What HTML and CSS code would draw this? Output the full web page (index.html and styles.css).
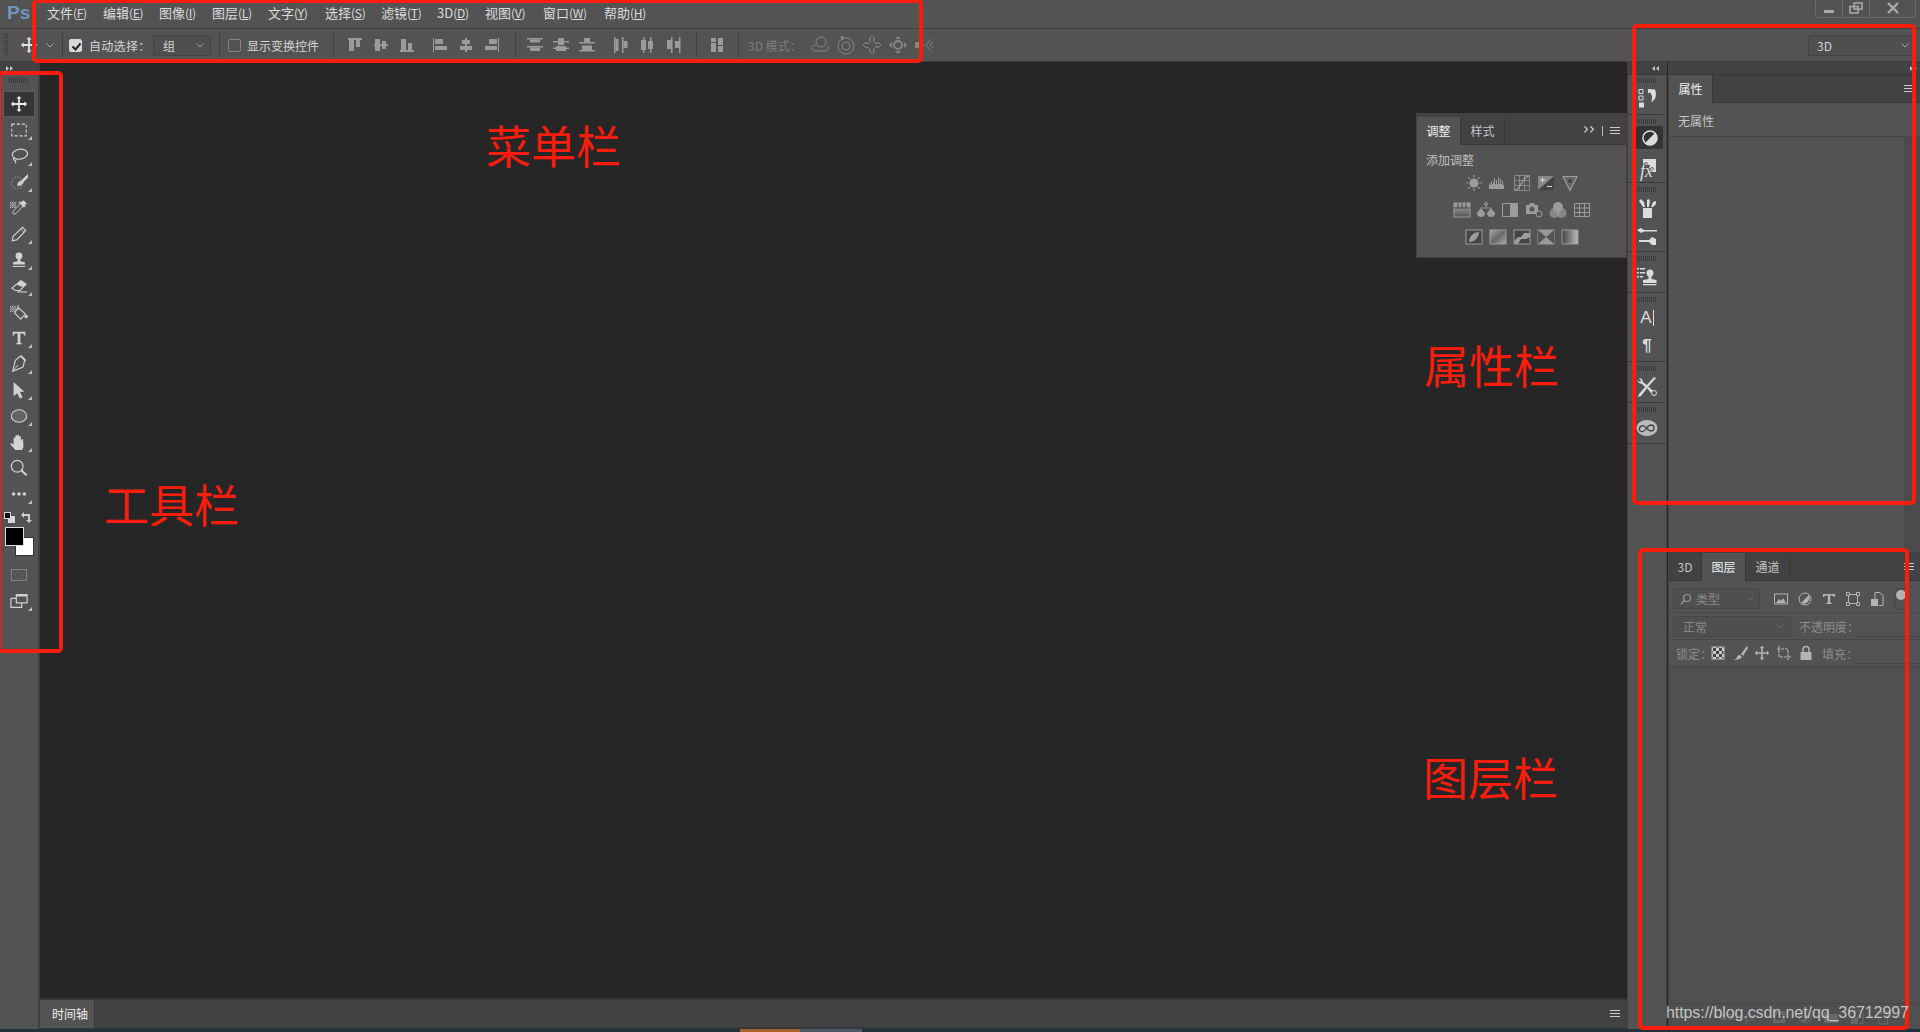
FILE: index.html
```html
<!DOCTYPE html>
<html lang="zh-CN">
<head>
    <meta charset="UTF-8">
    <title>Photoshop 界面</title>
    <link rel="stylesheet" href="styles.css">
</head>
<body>
<svg class="defs" width="0" height="0">
    <defs>
        <pattern id="chk" width="2" height="2" patternUnits="userSpaceOnUse"><rect width="2" height="2" fill="#eee"/><rect width="1" height="1" fill="#222"/><rect x="1" y="1" width="1" height="1" fill="#222"/></pattern>
        <pattern id="chk4" width="6" height="6" patternUnits="userSpaceOnUse"><rect width="6" height="6" fill="#ccc"/><rect width="3" height="3" fill="#444"/><rect x="3" y="3" width="3" height="3" fill="#444"/></pattern>
        <linearGradient id="gh"><stop offset="0" stop-color="#444"/><stop offset="1" stop-color="#bbb"/></linearGradient>
        <linearGradient id="gv" x2="0" y2="1"><stop offset="0" stop-color="#aaa"/><stop offset="1" stop-color="#555"/></linearGradient>
        <linearGradient id="gd" x2="1" y2="1"><stop offset="0" stop-color="#aaa"/><stop offset=".5" stop-color="#666"/><stop offset="1" stop-color="#aaa"/></linearGradient>

        <symbol id="s-right" viewBox="0 0 8 5"><path d="M0 0l3 2.500L0 5zM4 0l3 2.500L4 5z"/></symbol>
        <symbol id="s-left" viewBox="0 0 8 5"><path d="M3 0L0 2.500 3 5zM7 0L4 2.500 7 5z"/></symbol>

        <!-- tools -->
        <symbol id="i-move" viewBox="0 0 20 20"><path d="M10 1l3 3h-2v5h5V7l3 3-3 3v-2h-5v5h2l-3 3-3-3h2v-5H4v2l-3-3 3-3v2h5V4H7z"/></symbol>
        <symbol id="i-marquee" viewBox="0 0 20 20"><rect x="2" y="3.500" width="16" height="13" fill="none" stroke="currentColor" stroke-width="1.200" stroke-dasharray="3.500 2"/></symbol>
        <symbol id="i-lasso" viewBox="0 0 20 20"><ellipse cx="11" cy="8" rx="8.500" ry="5.500" fill="none" stroke="currentColor" stroke-width="1.300" transform="rotate(-8 11 8)"/><path d="M5 12c-2 1-1 3 1 3 1 1 0 2 0 3" fill="none" stroke="currentColor" stroke-width="1.300"/></symbol>
        <symbol id="i-qsel" viewBox="0 0 20 20"><circle cx="8" cy="11" r="6.500" fill="none" stroke="currentColor" stroke-dasharray="1 2"/><path d="M20 1l-8 8c-2 0-4 2-4 5 3 1 6-1 6-3l6-6z"/></symbol>
        <symbol id="i-drop" viewBox="0 0 20 20"><rect x="0" y="3" width="7" height="7" fill="url(#chk)"/><path d="M15 2l3 3-2 2 1 1-2 1-1-1-7 8-3 1-1-1 1-3 7-7-1-1 1-2 1 1z" fill="none" stroke="currentColor"/><path d="M15 2l3 3-2 2 1 1-2 1-4-4 1-2 1 1z"/></symbol>
        <symbol id="i-pencil" viewBox="0 0 20 20"><path d="M2.500 17.500l1-5L14 2.500l3.500 3.500L7.500 16.500z" fill="none" stroke="currentColor" stroke-width="1.300"/><path d="M12 4.500l3.500 3.500" stroke="currentColor"/></symbol>
        <symbol id="i-stamp" viewBox="0 0 20 20"><circle cx="10" cy="5.500" r="3.800"/><path d="M8.500 8h3v3.500l5 1V15h-13v-2.500l5-1z"/><rect x="3" y="16.500" width="14" height="1.200"/></symbol>
        <symbol id="i-eraser" viewBox="0 0 20 20"><path d="M2 12.500L12 4l6 4-7 7H6z" fill="none" stroke="currentColor" stroke-width="1.200"/><path d="M7 8.300L12 4l6 4-3.500 3.500z"/><rect x="8" y="16" width="11" height="1.200"/></symbol>
        <symbol id="i-fill" viewBox="0 0 20 20"><rect x="0" y="3" width="7" height="7" fill="url(#chk)"/><path d="M9 5l8 7-5 6-7-7z" fill="none" stroke="currentColor" stroke-width="1.200"/><path d="M9 2v6" stroke="currentColor"/><circle cx="18" cy="15" r="2"/></symbol>
        <symbol id="i-type" viewBox="0 0 20 20"><path d="M3 3h14v4.500h-1C15.500 5.500 15 5 13 5h-1.500v10.500l2 .5v1h-7v-1l2-.5V5H7C5 5 4.500 5.500 4 7.500H3z"/></symbol>
        <symbol id="i-pen" viewBox="0 0 20 20"><path d="M12 1l1 1 4 4-1 1-1.500 6.500L3 18l3-12z" fill="none" stroke="currentColor" stroke-width="1.300"/><path d="M4 17l5-6" stroke="currentColor"/><path d="M11 1.500l5.500 5.500 1-2-4.500-4.500z"/></symbol>
        <symbol id="i-arrow" viewBox="0 0 20 20"><path d="M4 1l12 11h-5l3 6-3 1.500-3-6-4 3.500z"/></symbol>
        <symbol id="i-ellipse" viewBox="0 0 20 20"><ellipse cx="10" cy="10" rx="8.500" ry="7" fill="currentColor" fill-opacity=".15" stroke="currentColor" stroke-width="1.200"/></symbol>
        <symbol id="i-hand" viewBox="0 0 20 20"><path d="M6 19C4 17 2 14 0 12c1-1.500 3-.5 4 1V6c0-1.500 2-1.500 2 0v3V3.500c0-1.500 2-1.500 2 0V9V3c0-1.500 2-1.500 2 0v6V4.500c0-1.500 2-1.500 2 0V9l1-2c1-1 2 0 1.500 1L15 15c-.5 2-1 3-2 4z"/></symbol>
        <symbol id="i-zoom" viewBox="0 0 20 20"><circle cx="8" cy="8" r="6.500" fill="none" stroke="currentColor" stroke-width="1.300"/><path d="M12.500 12.500l6 5.500" stroke="currentColor" stroke-width="2.400"/></symbol>
        <symbol id="i-dots" viewBox="0 0 20 20"><circle cx="4" cy="10" r="2"/><circle cx="10" cy="10" r="2"/><circle cx="16" cy="10" r="2"/></symbol>
        <symbol id="i-qmask" viewBox="0 0 20 20"><rect x="1.500" y="4" width="17" height="12" fill="none" stroke="currentColor"/><circle cx="10" cy="10" r="4" fill="none" stroke="currentColor" stroke-dasharray="1 2"/></symbol>
        <symbol id="i-screen" viewBox="0 0 20 20"><path d="M7 3h12v9H7z M1 7h6M1 7v10h12v-5" fill="none" stroke="currentColor" stroke-width="1.300"/><rect x="7" y="3" width="12" height="2"/></symbol>

        <!-- align / distribute -->
        <symbol id="a-top" viewBox="0 0 20 20"><rect x="3" y="3" width="14" height="2"/><rect x="4" y="5" width="5" height="11"/><rect x="11" y="5" width="4" height="7"/></symbol>
        <symbol id="a-vc" viewBox="0 0 20 20"><rect x="3" y="9" width="14" height="2"/><rect x="4" y="4" width="5" height="12"/><rect x="11" y="6" width="4" height="8"/></symbol>
        <symbol id="a-bot" viewBox="0 0 20 20"><rect x="3" y="15" width="14" height="2"/><rect x="4" y="4" width="5" height="11"/><rect x="11" y="8" width="4" height="7"/></symbol>
        <symbol id="a-left" viewBox="0 0 20 20"><rect x="3" y="3" width="1" height="14"/><rect x="5" y="4" width="8" height="5"/><rect x="5" y="11" width="12" height="4"/></symbol>
        <symbol id="a-hc" viewBox="0 0 20 20"><rect x="9" y="3" width="2" height="14"/><rect x="6" y="5" width="8" height="4"/><rect x="4" y="11" width="12" height="4"/></symbol>
        <symbol id="a-right" viewBox="0 0 20 20"><rect x="16" y="3" width="1" height="14"/><rect x="7" y="4" width="8" height="5"/><rect x="3" y="11" width="12" height="4"/></symbol>
        <symbol id="d-top" viewBox="0 0 20 20"><rect x="2" y="3" width="16" height="1.500"/><rect x="5" y="4.500" width="10" height="3"/><rect x="2" y="11" width="16" height="1.500"/><rect x="5" y="12.500" width="10" height="3.500"/></symbol>
        <symbol id="d-vc" viewBox="0 0 20 20"><rect x="2" y="6" width="16" height="1.500"/><rect x="7" y="3" width="6" height="7"/><rect x="2" y="12.500" width="16" height="1.500"/><rect x="5" y="11" width="10" height="5"/></symbol>
        <symbol id="d-bot" viewBox="0 0 20 20"><rect x="2" y="7" width="16" height="1.500"/><rect x="7" y="3" width="6" height="4"/><rect x="2" y="15" width="16" height="1.500"/><rect x="5" y="10.500" width="10" height="4.500"/></symbol>
        <symbol id="d-left" viewBox="0 0 20 20"><rect x="3" y="2" width="1.500" height="16"/><rect x="4.500" y="4" width="3" height="12"/><rect x="11" y="2" width="1.500" height="16"/><rect x="12.500" y="6" width="4" height="7"/></symbol>
        <symbol id="d-hc" viewBox="0 0 20 20"><rect x="6" y="2" width="1.500" height="16"/><rect x="4" y="5" width="5" height="10"/><rect x="13" y="2" width="1.500" height="16"/><rect x="11" y="6" width="5" height="8"/></symbol>
        <symbol id="d-right" viewBox="0 0 20 20"><rect x="8" y="2" width="1.500" height="16"/><rect x="4" y="5" width="4" height="9"/><rect x="16" y="2" width="1.500" height="16"/><rect x="12" y="6" width="4" height="7"/></symbol>
        <symbol id="a-auto" viewBox="0 0 20 20"><rect x="4" y="3" width="5" height="4"/><rect x="4" y="8" width="5" height="9"/><rect x="11" y="3" width="5" height="7"/><rect x="11" y="11" width="5" height="6"/></symbol>

        <!-- 3d mode -->
        <symbol id="m-orbit" viewBox="0 0 20 20"><g fill="none" stroke="currentColor"><circle cx="11" cy="7" r="5"/><path d="M6 10c-4 0-5 3-4 4l3 2h11c3-1 3-4 1-5"/></g></symbol>
        <symbol id="m-roll" viewBox="0 0 20 20"><g fill="none" stroke="currentColor"><circle cx="10" cy="11" r="8"/><circle cx="10" cy="11" r="4"/></g><path d="M4 1l5 1-3 4z"/></symbol>
        <symbol id="m-pan" viewBox="0 0 20 20"><path d="M10 1l3 3h-1.500v2.500c2 .5 2 .5 2 2h2.500V7l3 3-3 3v-1.500h-2.500c0 1.500 0 1.500-2 2V16H13l-3 3-3-3h1.500v-1.500c-2-.5-2-.5-2-2H4V13l-3-3 3-3v1.500h2.500c0-1.500 0-1.500 2-2V4H7z" fill="none" stroke="currentColor"/></symbol>
        <symbol id="m-slide" viewBox="0 0 20 20"><path d="M10 1l3 3h-6zM10 19l3-3H7zM1 10l3-3v6zM19 10l-3-3v6z"/><circle cx="10" cy="10" r="4" fill="none" stroke="currentColor" stroke-width="2"/></symbol>
        <symbol id="m-scale" viewBox="0 0 20 20"><rect x="1" y="7" width="4" height="6"/><path d="M6 7l4 3-4 3zM17 4l-5 6 5 6M19 7l-3 3 3 3" fill="none" stroke="currentColor"/></symbol>

        <!-- adjustments -->
        <symbol id="j-sun" viewBox="0 0 18 18"><circle cx="9" cy="9" r="4.500"/><path d="M9 1v2.500M9 14.500V17M1 9h2.500M14.500 9H17M3.300 3.300l1.800 1.800M12.900 12.900l1.800 1.800M14.700 3.300l-1.800 1.800M5.100 12.900l-1.800 1.800" stroke="currentColor" stroke-width="1.200"/></symbol>
        <symbol id="j-levels" viewBox="0 0 18 18"><path d="M0 15V9h1v2h1V7h1v3h1V8h1V4h1v6h1V6h1v4h1V3h1v7h1V5h1v5h1V7h1v4h1v4z"/></symbol>
        <symbol id="j-curves" viewBox="0 0 18 18"><path d="M1.500 1.500h15v15h-15zM6.500 1.500v15M11.500 1.500v15M1.500 6.500h15M1.500 11.500h15" fill="none" stroke="currentColor" stroke-opacity=".7"/><path d="M2 16c6 0 6-13 14-14" fill="none" stroke="currentColor" stroke-width="1.300"/></symbol>
        <symbol id="j-expo" viewBox="0 0 18 18"><rect x="1" y="2" width="16" height="14" fill="#888"/><path d="M1 16L17 2v14z" fill="#444"/><path d="M3 6h5M5.500 3.500v5M10 12.500h5" stroke="#ddd"/></symbol>
        <symbol id="j-vib" viewBox="0 0 18 18"><path d="M2 2.500h14L9 16.500z" fill="#666" stroke="currentColor" stroke-width="1.200"/><circle cx="9" cy="7" r="2" fill="#444"/></symbol>
        <symbol id="j-hsl" viewBox="0 0 18 18"><rect x="1" y="2" width="16" height="14" fill="url(#gv)" stroke="currentColor"/><path d="M1 7h16M5 2v5M9 2v5M13 2v5" stroke="#444"/></symbol>
        <symbol id="j-bal" viewBox="0 0 18 18"><path d="M9 3v3M4 7h10" stroke="currentColor"/><circle cx="9" cy="3" r="1.500" fill="none" stroke="currentColor"/><path d="M0 12l4-5 4 5a4 4 0 0 1-8 0zM10 12l4-5 4 5a4 4 0 0 1-8 0z"/></symbol>
        <symbol id="j-bw" viewBox="0 0 18 18"><rect x="1.500" y="2.500" width="15" height="13" fill="#555" stroke="currentColor"/><rect x="9" y="2.500" width="7.500" height="13"/></symbol>
        <symbol id="j-photo" viewBox="0 0 18 18"><path d="M1 4h3l1-2h4l1 2h3v9H1z"/><circle cx="7" cy="8" r="2.500" fill="#555"/><circle cx="14" cy="13" r="3" fill="#555" stroke="currentColor"/></symbol>
        <symbol id="j-mix" viewBox="0 0 18 18"><circle cx="9" cy="6" r="5"/><circle cx="5.500" cy="12" r="5" fill-opacity=".7"/><circle cx="12.500" cy="12" r="5" fill-opacity=".7"/></symbol>
        <symbol id="j-lut" viewBox="0 0 18 18"><path d="M1.500 2.500h15v13h-15zM6.500 2.500v13M11.500 2.500v13M1.500 7h15M1.500 11.500h15" fill="none" stroke="currentColor"/></symbol>
        <symbol id="j-inv" viewBox="0 0 18 18"><rect x="1" y="2" width="16" height="14" fill="#444" stroke="currentColor"/><path d="M4 14C4 8 9 4 14 4c0 5-4 10-10 10z"/></symbol>
        <symbol id="j-post" viewBox="0 0 18 18"><rect x="1" y="2" width="16" height="14" fill="url(#gd)" stroke="currentColor"/></symbol>
        <symbol id="j-thr" viewBox="0 0 18 18"><rect x="1" y="2" width="16" height="14" fill="#444" stroke="currentColor"/><path d="M1 13l4-4h3l3-4h6v4l-4 2H8l-3 5H1z"/></symbol>
        <symbol id="j-sel" viewBox="0 0 18 18"><rect x="1" y="2" width="16" height="14" stroke="currentColor" fill="#999"/><path d="M1 2l8 7-8 7zM17 2L9 9l8 7z" fill="#555"/></symbol>
        <symbol id="j-grad" viewBox="0 0 18 18"><rect x="1" y="2" width="16" height="14" fill="url(#gh)" stroke="currentColor"/></symbol>

        <!-- dock -->
        <symbol id="k-hist" viewBox="0 0 22 22"><path d="M3 1.500h4v4H3zM3 8h4v4H3z" fill="none" stroke="currentColor"/><rect x="3" y="14.500" width="5" height="5"/><path d="M12 1l7 .5c2 5 1 10-4 13 2-4 1-8-1-10l-2 1z"/></symbol>
        <symbol id="k-adj" viewBox="0 0 22 22"><circle cx="11" cy="11" r="7" fill="#333" stroke="currentColor" stroke-width="1.500"/><path d="M16 6a7 7 0 0 1-10 10z"/></symbol>
        <symbol id="k-fx" viewBox="0 0 22 22"><path d="M7 3h13v13h-8l2-7H7z"/></symbol>
        <symbol id="k-brush" viewBox="0 0 22 22"><rect x="7" y="11" width="9" height="10"/><path d="M7 10L3 4l2-2 3 3 1 5zM11 10V3l2-1 1 2-1 6zM15 10l2-5 3-1v3l-3 3z"/></symbol>
        <symbol id="k-slide" viewBox="0 0 22 22"><path d="M1 5l4-2 3 2h13v1.500H8L5 8zM3 15h10l3-3 4 2v6h-4l-3-3H3z"/></symbol>
        <symbol id="k-clone" viewBox="0 0 22 22"><path d="M1 2h2v1.500H1zM1 6h2v1.500H1zM1 10h2v1.500H1zM4 2h5v1.500H4zM4 6h5v1.500H4zM4 10h3v1.500H4z"/><circle cx="14" cy="7" r="3.500"/><path d="M12.500 9h3v4l5 1v3H7v-3l5.500-1zM7 18h13.500v1.200H7z"/></symbol>
        <symbol id="k-tools" viewBox="0 0 22 22"><path d="M3 2l3 1 1 3 5 4-2 2-4-4-3-1-2-3 3 2 1-1z"/><path d="M18 1l2 1-8 9 -7 9-3 1 1-3z"/><path d="M11 12l2-1 4 4-2 2z"/><circle cx="18" cy="17" r="2.500" fill="#535353" stroke="currentColor"/></symbol>
        <symbol id="k-cc" viewBox="0 0 22 22"><ellipse cx="11" cy="11" rx="10.500" ry="8" fill-opacity=".75"/><path d="M4 14c-2-3 1-6 4-5 3 2 4 5 7 5 4 0 4-6 0-6-3 0-4 3-5 4-2 3-4 3-6 2z" fill="none" stroke="#444" stroke-width="1.300"/></symbol>

        <!-- layers -->
        <symbol id="l-img" viewBox="0 0 16 16"><rect x="1.500" y="3" width="13" height="10" fill="none" stroke="currentColor"/><path d="M3 12l3-4 2 2 2-3 3 5z"/></symbol>
        <symbol id="l-adj" viewBox="0 0 16 16"><circle cx="8" cy="8" r="6" fill="none" stroke="currentColor"/><path d="M12 4a6 6 0 0 1-8 8z"/></symbol>
        <symbol id="l-t" viewBox="0 0 16 16"><path d="M2 3h12v3h-1c-.5-1-1-1.500-2.500-1.500H9.200v7l1.500.5v1H5.300v-1l1.500-.5v-7H5.500C4 4.500 3.500 5 3 6H2z"/></symbol>
        <symbol id="l-shape" viewBox="0 0 16 16"><path d="M3.500 3.500h9v9h-9z" fill="none" stroke="currentColor"/><path d="M1.500 1.500h3v3h-3zM11.500 1.500h3v3h-3zM1.500 11.500h3v3h-3zM11.500 11.500h3v3h-3z" fill="#535353" stroke="currentColor"/></symbol>
        <symbol id="l-smart" viewBox="0 0 16 16"><path d="M6 8V1.500h5l3 3v10h-4" fill="none" stroke="currentColor"/><rect x="2" y="8" width="7" height="7"/></symbol>
        <symbol id="l-brush" viewBox="0 0 16 16"><path d="M15 1l-6 8 2 2 5-8zM8 10c-2 0-3 1-3 2s-1 2-3 3c3 0 7-1 8-3z"/></symbol>
        <symbol id="l-crop" viewBox="0 0 16 16"><path d="M3 1v11h12M1 4h11v11" fill="none" stroke="currentColor" stroke-width="1.200" stroke-dasharray="3 1"/></symbol>
        <symbol id="l-lock" viewBox="0 0 16 16"><rect x="2.500" y="7" width="11" height="8"/><path d="M5 7V4.500a3 3 0 0 1 6 0V7" fill="none" stroke="currentColor" stroke-width="1.500"/></symbol>
        <symbol id="l-link" viewBox="0 0 16 16"><path d="M1 8a3 3 0 0 1 3-3h3v1.500H4a1.500 1.500 0 0 0 0 3h3V11H4a3 3 0 0 1-3-3zM9 5h3a3 3 0 0 1 0 6H9V9.500h3a1.500 1.500 0 0 0 0-3H9z"/></symbol>
        <symbol id="l-circ" viewBox="0 0 16 16"><path d="M2 2h12v12H2z"/><circle cx="8" cy="8" r="3.500" fill="#505050"/></symbol>
        <symbol id="l-folder" viewBox="0 0 16 16"><path d="M1 3h5l1 2h8v9H1z"/></symbol>
        <symbol id="l-trash" viewBox="0 0 16 16"><path d="M3 4h10l-1 11H4zM2 2.500h12V4H2z" fill="none" stroke="currentColor"/></symbol>
    </defs>
</svg>

<div class="app">
    <div class="menubar">
        <div class="logo">Ps</div>
        <div class="menu">
            <span class="m56">文件<i>(<u>F</u>)</i></span>
            <span class="m56">编辑<i>(<u>E</u>)</i></span>
            <span class="m53">图像<i>(<u>I</u>)</i></span>
            <span class="m56">图层<i>(<u>L</u>)</i></span>
            <span class="m57">文字<i>(<u>Y</u>)</i></span>
            <span class="m56">选择<i>(<u>S</u>)</i></span>
            <span class="m56">滤镜<i>(<u>T</u>)</i></span>
            <span class="m48">3D<i>(<u>D</u>)</i></span>
            <span class="m58">视图<i>(<u>V</u>)</i></span>
            <span class="m61">窗口<i>(<u>W</u>)</i></span>
            <span class="m56">帮助<i>(<u>H</u>)</i></span>
        </div>
        <div class="winbtns">
            <div class="winbtn w-min"><svg width="12" height="12" viewBox="0 0 12 12"><rect x="1" y="8" width="10" height="3" fill="#aaa"/></svg></div>
            <div class="winbtn w-max"><svg width="14" height="12" viewBox="0 0 14 12"><path d="M5 1h8v6H5z M1 4.500h8v6.500H1z" fill="none" stroke="#aaa" stroke-width="1.600"/></svg></div>
            <div class="winbtn w-close"><svg width="14" height="12" viewBox="0 0 14 12"><path d="M2 1l10 10M12 1L2 11" stroke="#aaa" stroke-width="2.400"/></svg></div>
        </div>
    </div>

    <div class="optbar">
        <div class="grip-v"></div>
        <svg class="opt-move"><use href="#i-move"/></svg>
        <svg class="chev opt-chev" viewBox="0 0 8 5"><path d="M.5.500L4 4 7.500.500" fill="none" stroke="currentColor"/></svg>
        <div class="vsep s1"></div>
        <div class="check on"><svg viewBox="0 0 13 13" width="13" height="13"><path d="M2.500 6.500L5.500 9.500 10.500 3.500" fill="none" stroke="#222" stroke-width="2"/></svg></div>
        <span class="opt-label l1">自动选择：</span>
        <div class="select sel-group"><span>组</span><svg class="chev" viewBox="0 0 8 5"><path d="M.5.500L4 4 7.500.500" fill="none" stroke="currentColor"/></svg></div>
        <div class="vsep s2"></div>
        <div class="check"></div>
        <span class="opt-label l2">显示变换控件</span>
        <div class="vsep s3"></div>
        <div class="oi-group g1">
            <svg class="oi"><use href="#a-top"/></svg><svg class="oi"><use href="#a-vc"/></svg><svg class="oi"><use href="#a-bot"/></svg>
        </div>
        <div class="oi-group g2">
            <svg class="oi"><use href="#a-left"/></svg><svg class="oi"><use href="#a-hc"/></svg><svg class="oi"><use href="#a-right"/></svg>
        </div>
        <div class="vsep s4"></div>
        <div class="oi-group g3">
            <svg class="oi"><use href="#d-top"/></svg><svg class="oi"><use href="#d-vc"/></svg><svg class="oi"><use href="#d-bot"/></svg>
        </div>
        <div class="oi-group g4">
            <svg class="oi"><use href="#d-left"/></svg><svg class="oi"><use href="#d-hc"/></svg><svg class="oi"><use href="#d-right"/></svg>
        </div>
        <div class="vsep s5"></div>
        <div class="oi-group g5"><svg class="oi"><use href="#a-auto"/></svg></div>
        <div class="vsep s6"></div>
        <span class="opt-label mode-label">3D 模式：</span>
        <div class="oi-group dim">
            <svg class="oi"><use href="#m-orbit"/></svg><svg class="oi"><use href="#m-roll"/></svg><svg class="oi"><use href="#m-pan"/></svg><svg class="oi"><use href="#m-slide"/></svg><svg class="oi"><use href="#m-scale"/></svg>
        </div>
        <div class="select sel-3d"><span>3D</span><svg class="chev" viewBox="0 0 8 5"><path d="M.5.500L4 4 7.500.500" fill="none" stroke="currentColor"/></svg></div>
    </div>

    <div class="workspace">
        <div class="tools">
            <div class="strip"><svg class="arrows"><use href="#s-right"/></svg></div>
            <div class="grip tools-grip"></div>
            <div class="tool active"><svg><use href="#i-move"/></svg></div>
            <div class="tool more"><svg><use href="#i-marquee"/></svg></div>
            <div class="tool more"><svg><use href="#i-lasso"/></svg></div>
            <div class="tool more"><svg><use href="#i-qsel"/></svg></div>
            <div class="tool"><svg><use href="#i-drop"/></svg></div>
            <div class="tool more"><svg><use href="#i-pencil"/></svg></div>
            <div class="tool more"><svg><use href="#i-stamp"/></svg></div>
            <div class="tool more"><svg><use href="#i-eraser"/></svg></div>
            <div class="tool"><svg><use href="#i-fill"/></svg></div>
            <div class="tool more"><svg><use href="#i-type"/></svg></div>
            <div class="tool more"><svg><use href="#i-pen"/></svg></div>
            <div class="tool more"><svg><use href="#i-arrow"/></svg></div>
            <div class="tool more"><svg><use href="#i-ellipse"/></svg></div>
            <div class="tool more"><svg><use href="#i-hand"/></svg></div>
            <div class="tool"><svg><use href="#i-zoom"/></svg></div>
            <div class="tool more"><svg><use href="#i-dots"/></svg></div>
            <div class="swap-row">
                <div class="mini-swatch"><b></b><em></em></div>
                <svg class="swap" viewBox="0 0 12 12" width="12" height="12"><path d="M0 3l3-3v2h6v6h2l-3 3-3-3h2V4H3v2z" fill="#ccc"/></svg>
            </div>
            <div class="swatches"><div class="bg"></div><div class="fg"></div></div>
            <div class="tool q"><svg><use href="#i-qmask"/></svg></div>
            <div class="tool more"><svg><use href="#i-screen"/></svg></div>
        </div>

        <div class="center">
            <div class="canvas">
                <div class="adjust">
                    <div class="tabs tabs-adj">
                        <span class="tab active t-43">调整</span>
                        <span class="tab t-43">样式</span>
                        <span class="tabs-tail"><span class="chevs">››</span><span class="bar"></span><span class="burger"></span></span>
                    </div>
                    <div class="adj-title">添加调整</div>
                    <div class="adj-row">
                        <svg><use href="#j-sun"/></svg><svg><use href="#j-levels"/></svg><svg><use href="#j-curves"/></svg><svg><use href="#j-expo"/></svg><svg><use href="#j-vib"/></svg>
                    </div>
                    <div class="adj-row">
                        <svg><use href="#j-hsl"/></svg><svg><use href="#j-bal"/></svg><svg><use href="#j-bw"/></svg><svg><use href="#j-photo"/></svg><svg><use href="#j-mix"/></svg><svg><use href="#j-lut"/></svg>
                    </div>
                    <div class="adj-row">
                        <svg><use href="#j-inv"/></svg><svg><use href="#j-post"/></svg><svg><use href="#j-thr"/></svg><svg><use href="#j-sel"/></svg><svg><use href="#j-grad"/></svg>
                    </div>
                </div>
            </div>
            <div class="timeline">
                <span class="tab active tl-tab">时间轴</span>
                <span class="tabs-tail"><span class="burger"></span></span>
            </div>
        </div>

        <div class="dock">
            <div class="strip strip-dock"><svg class="arrows"><use href="#s-left"/></svg></div>
            <div class="dock-group first"><div class="grip"></div><div class="dock-ic"><svg><use href="#k-hist"/></svg></div></div>
            <div class="dock-group">
                <div class="grip"></div>
                <div class="dock-ic sel"><svg><use href="#k-adj"/></svg></div>
                <div class="dock-ic"><svg><use href="#k-fx"/></svg><span class="fx">fx</span></div>
            </div>
            <div class="dock-group">
                <div class="grip"></div>
                <div class="dock-ic"><svg><use href="#k-brush"/></svg></div>
                <div class="dock-ic"><svg><use href="#k-slide"/></svg></div>
            </div>
            <div class="dock-group"><div class="grip"></div><div class="dock-ic"><svg><use href="#k-clone"/></svg></div></div>
            <div class="dock-group">
                <div class="grip"></div>
                <div class="dock-ic glyph-a">A<span class="caret"></span></div>
                <div class="dock-ic glyph-p">¶</div>
            </div>
            <div class="dock-group"><div class="grip"></div><div class="dock-ic"><svg><use href="#k-tools"/></svg></div></div>
            <div class="dock-group"><div class="grip"></div><div class="dock-ic"><svg><use href="#k-cc"/></svg></div></div>
        </div>

        <div class="panels">
            <div class="strip strip-panels"><svg class="arrows"><use href="#s-right"/></svg></div>
            <div class="panel props">
                <div class="tabs">
                    <span class="tab active t-43">属性</span>
                    <span class="tabs-tail"><span class="burger"></span></span>
                </div>
                <div class="no-props">无属性</div>
                <div class="props-body"><div class="scroll"></div></div>
            </div>
            <div class="panel layers">
                <div class="tabs">
                    <span class="tab t-33">3D</span>
                    <span class="tab active t-43">图层</span>
                    <span class="tab t-43">通道</span>
                    <span class="tabs-tail"><span class="burger"></span></span>
                </div>
                <div class="lay-row filter-row">
                    <div class="select sel-filter">
                        <svg viewBox="0 0 12 12" width="12" height="12"><circle cx="7" cy="5" r="3.500" fill="none" stroke="#999" stroke-width="1.200"/><path d="M4.500 7.500L1 11" stroke="#999" stroke-width="1.500"/></svg>
                        <span>类型</span>
                        <svg class="chev" viewBox="0 0 8 5"><path d="M.5.500L4 4 7.500.500" fill="none" stroke="currentColor"/></svg>
                    </div>
                    <svg class="li"><use href="#l-img"/></svg><svg class="li"><use href="#l-adj"/></svg><svg class="li"><use href="#l-t"/></svg><svg class="li"><use href="#l-shape"/></svg><svg class="li"><use href="#l-smart"/></svg>
                    <div class="toggle"></div>
                </div>
                <div class="lay-row blend-row">
                    <div class="select sel-blend"><span>正常</span><svg class="chev" viewBox="0 0 8 5"><path d="M.5.500L4 4 7.500.500" fill="none" stroke="currentColor"/></svg></div>
                    <span class="dim-label">不透明度：</span>
                    <div class="under"></div>
                </div>
                <div class="lay-row lock-row">
                    <span class="dim-label lock-label">锁定：</span>
                    <svg class="li" viewBox="0 0 16 16"><rect x="2" y="2" width="12" height="12" fill="url(#chk4)" stroke="#bbb"/></svg>
                    <svg class="li"><use href="#l-brush"/></svg>
                    <svg class="li"><use href="#i-move"/></svg>
                    <svg class="li"><use href="#l-crop"/></svg>
                    <svg class="li"><use href="#l-lock"/></svg>
                    <span class="dim-label fill-label">填充：</span>
                    <div class="under"></div>
                </div>
                <div class="lay-body"></div>
                <div class="lay-foot">
                    <svg><use href="#l-link"/></svg><span class="fx-foot">fx</span><svg><use href="#l-circ"/></svg><svg><use href="#l-adj"/></svg><svg><use href="#l-folder"/></svg><svg><use href="#l-smart"/></svg><svg><use href="#l-trash"/></svg>
                </div>
            </div>
        </div>
    </div>

    <div class="taskbar"><span class="task-a"></span><span class="task-b"></span></div>
</div>

<!-- annotations drawn over the screenshot -->
<div class="box box-menu"></div>
<div class="box box-tools"></div>
<div class="box box-props"></div>
<div class="box box-layers"></div>
<div class="note note-menu">菜单栏</div>
<div class="note note-tools">工具栏</div>
<div class="note note-props">属性栏</div>
<div class="note note-layers">图层栏</div>
<div class="watermark">https://blog.csdn.net/qq_36712997</div>
</body>
</html>
```

FILE: styles.css
```css
* { box-sizing: border-box; }
html, body { margin: 0; height: 100%; overflow: hidden; }
body { font-family: "Noto Sans CJK SC", "Liberation Sans", sans-serif; font-size: 12px; color: #d4d4d4; background: #262626; position: relative; }
svg { fill: currentColor; display: block; }
.defs { position: absolute; }
.app { height: 1032px; display: flex; flex-direction: column; }

/* title + menu */
.menubar { height: 29px; background: #535353; border-bottom: 1px solid #3c3c3c; display: flex; position: relative; flex: none; }
.logo { width: 38px; padding-left: 7px; font: bold 19px/26px "Liberation Sans", sans-serif; color: #6f95bd; }
.menu { display: flex; padding-left: 9px; line-height: 26px; font-size: 13px; color: #dcdcdc; white-space: nowrap; }
.menu span { display: block; }
.m48 { width: 48px; }
.m53 { width: 53px; }
.m56 { width: 56px; }
.m57 { width: 57px; }
.m58 { width: 58px; }
.m61 { width: 61px; }
.menu i { font-style: normal; font-size: 12px; letter-spacing: -.3px; }
.winbtns { margin-left: auto; margin-right: 4px; height: 18px; width: 101px; display: flex; border: 1px solid #6a6a6a; border-top: 0; border-radius: 0 0 4px 4px; }
.winbtn { display: flex; align-items: center; justify-content: center; border-right: 1px solid #6a6a6a; padding-bottom: 2px; }
.w-min { width: 27px; }
.w-max { width: 27px; }
.w-close { flex: 1; border-right: 0; }

/* options */
.optbar { height: 33px; background: #535353; border-bottom: 1px solid #3c3c3c; display: flex; align-items: center; flex: none; }
.grip-v { width: 4px; height: 22px; margin-left: 4px; background: repeating-linear-gradient(#3e3e3e 0 1px, transparent 1px 2px); }
.opt-move { width: 18px; height: 18px; margin: 0 1px 0 12px; color: #e0e0e0; }
.chev { width: 8px; height: 5px; color: #aaa; flex: none; }
.opt-chev { margin-left: 7px; }
.vsep { width: 1px; height: 24px; background: #404040; flex: none; }
.s1 { margin-left: 8px; }
.check { width: 13px; height: 13px; margin-left: 8px; border: 1px solid #858585; border-radius: 2px; flex: none; }
.check.on { background: #d8d8d8; border-color: #d8d8d8; margin-left: 6px; }
.opt-label { white-space: nowrap; color: #d4d4d4; font-size: 12px; }
.l1 { margin-left: 7px; width: 64px; letter-spacing: .3px; }
.select { height: 21px; border: 1px solid #444; border-radius: 2px; background: #4f4f4f; display: flex; align-items: center; justify-content: space-between; flex: none; padding: 0 6px; }
.sel-group { width: 58px; padding-left: 9px; }
.s2 { margin-left: 8px; }
.l2 { margin-left: 6px; }
.s3 { margin-left: 14px; }
.oi-group { display: flex; color: #9a9a9a; flex: none; }
.oi { width: 26px; height: 20px; }
.g1 { margin-left: 8px; }
.g2 { margin-left: 7px; }
.s4 { margin-left: 10px; }
.g3 { margin-left: 6px; }
.g4 { margin-left: 8px; }
.s5 { margin-left: 10px; }
.g5 { margin-left: 7px; }
.s6 { margin-left: 8px; }
.mode-label { margin-left: 9px; width: 59px; color: #7d7d7d; }
.dim { color: #858585; }
.sel-3d { margin-left: auto; margin-right: 4px; width: 108px; padding-left: 8px; }

/* workspace */
.workspace { flex: 1; display: flex; min-height: 0; }
.strip { height: 13px; background: #424242; border-bottom: 1px solid #383838; display: flex; align-items: center; flex: none; }
.arrows { width: 8px; height: 5px; color: #c4c4c4; margin-left: 6px; }
.grip { height: 5px; margin: 0 auto; width: 20px; background: repeating-linear-gradient(90deg, #3c3c3c 0 1px, transparent 1px 2px); }

.tools { width: 40px; background: #535353; border-right: 2px solid #3f3f3f; display: flex; flex-direction: column; flex: none; }
.tools-grip { margin-top: 3px; margin-bottom: 8px; flex: none; }
.tool { height: 26px; margin: 0 3px; display: flex; align-items: center; justify-content: center; position: relative; color: #d2d2d2; flex: none; border: 1px solid transparent; }
.tool svg { width: 18px; height: 18px; }
.tool.active { background: #343434; border-color: #5e5e5e; border-radius: 2px; color: #e6e6e6; }
.tool.more::after { content: ""; position: absolute; right: 2px; bottom: 2px; border: 2px solid transparent; border-right-color: #bdbdbd; border-bottom-color: #bdbdbd; }
.tool.q { color: #8a8a8a; margin-top: 4px; }
.swap-row { height: 16px; display: flex; justify-content: space-between; padding: 1px 5px 0 4px; margin-top: 4px; flex: none; }
.mini-swatch { width: 10px; height: 10px; position: relative; }
.mini-swatch b { position: absolute; right: -1px; bottom: -1px; width: 7px; height: 7px; background: #d6d6d6; }
.mini-swatch em { position: absolute; left: 0; top: 0; width: 7px; height: 7px; background: #111; border: 1px solid #d6d6d6; }
.swatches { height: 31px; position: relative; flex: none; }
.fg { position: absolute; left: 5px; top: 0; width: 19px; height: 19px; background: #000; border: 1px solid #ddd; }
.bg { position: absolute; left: 15px; top: 10px; width: 19px; height: 19px; background: #fff; border: 1px solid #333; }

/* canvas */
.center { flex: 1; display: flex; flex-direction: column; min-width: 0; }
.canvas { flex: 1; background: #262626; display: flex; justify-content: flex-end; align-items: flex-start; padding-top: 51px; min-height: 0; }
.timeline { height: 31px; background: #424242; border-top: 2px solid #373737; border-bottom: 2px solid #383838; display: flex; flex: none; }
.tl-tab { width: 55px; color: #eee; padding-left: 6px; }
.timeline .tabs-tail { padding-right: 7px; }

.adjust { width: 211px; height: 145px; background: #535353; border: 1px solid #424242; border-top-width: 4px; }
.tabs { height: 28px; background: #424242; border-bottom: 1px solid #383838; display: flex; align-items: stretch; flex: none; }
.tab { display: flex; align-items: center; justify-content: center; border-right: 1px solid #383838; color: #c4c4c4; padding-bottom: 1px; }
.tab.active { background: #535353; color: #f0f0f0; margin-bottom: -1px; }
.t-43 { width: 44px; }
.t-33 { width: 33px; }
.tabs-tail { margin-left: auto; display: flex; align-items: center; padding-right: 6px; }
.burger { width: 10px; height: 7px; border-top: 1px solid #ccc; border-bottom: 1px solid #ccc; position: relative; }
.burger::after { content: ""; position: absolute; left: 0; right: 0; top: 2px; height: 1px; background: #ccc; }
.chevs { font: 15px/20px "DejaVu Sans", sans-serif; color: #ddd; margin-right: 7px; padding-bottom: 3px; }
.bar { width: 1px; height: 10px; background: #bbb; margin-right: 7px; }
.adj-title { padding: 6px 0 0 9px; line-height: 18px; color: #bdbdbd; }
.adj-row { display: flex; justify-content: center; gap: 6px; height: 27px; align-items: center; color: #9c9c9c; }
.adj-row svg { width: 18px; height: 18px; }

/* dock */
.dock { width: 40px; background: #535353; border-left: 1px solid #3f3f3f; border-right: 1px solid #454545; flex: none; }
.strip-dock .arrows { margin-left: 24px; }
.dock-group { border-bottom: 1px solid #3c3c3c; padding: 4px 0 1px; }
.dock-group.first { padding-top: 3px; }
.dock-group .grip { margin-bottom: 2px; }
.dock-ic { height: 28px; display: flex; align-items: center; justify-content: center; color: #dcdcdc; position: relative; }
.dock-ic svg { width: 22px; height: 22px; }
.dock-ic.sel { background: #343434; margin: 1px 3px 4px 8px; height: 23px; border-radius: 2px; }
.fx { position: absolute; left: 12px; top: 8px; font: italic 18px/20px "Liberation Serif", serif; color: #dcdcdc; text-shadow: 1px 0 0 #535353, -1px 0 0 #535353, 0 -1px 0 #535353; }
.glyph-a { font: 17px/28px "Liberation Sans", sans-serif; }
.caret { width: 1px; height: 16px; background: #ddd; margin-left: 1px; }
.glyph-p { font: bold 17px/28px "Liberation Sans", sans-serif; }

/* panels */
.panels { flex: none; width: 252px; margin-left: 1px; display: flex; flex-direction: column; background: #535353; border-left: 1px solid #454545; }
.strip-panels { justify-content: flex-end; }
.strip-panels .arrows { margin: 0 2px 0 0; }
.panel { display: flex; flex-direction: column; }
.props { height: 478px; border-bottom: 1px solid #3f3f3f; flex: none; }
.no-props { height: 34px; line-height: 36px; padding-left: 9px; color: #c4c4c4; border-bottom: 1px solid #464646; flex: none; }
.props-body { flex: 1; display: flex; justify-content: flex-end; }
.scroll { width: 16px; background: #4b4b4b; }
.layers { flex: 1; min-height: 0; background: #505050; }
.layers .tabs .tab { color: #c4c4c4; }
.layers .tabs .tab.active { color: #f0f0f0; }
.lay-row { display: flex; align-items: center; border-bottom: 1px solid #474747; flex: none; padding-left: 4px; color: #9a9a9a; background: #535353; }
.filter-row { height: 32px; padding-top: 4px; }
.blend-row { height: 27px; }
.lock-row { height: 27px; }
.li { width: 16px; height: 16px; color: #b4b4b4; flex: none; }
.filter-row .li { margin-left: 8px; }
.filter-row .li:first-of-type { margin-left: 0; }
.sel-filter { width: 87px; height: 21px; padding: 0 5px 0 6px; color: #8a8a8a; margin-right: 13px; border-color: #474747; justify-content: flex-start; gap: 4px; }
.sel-filter .chev { margin-left: auto; color: #6c6c6c; }
.toggle { width: 14px; height: 22px; margin-left: 9px; border: 1px solid #444; border-right: 0; border-radius: 7px 0 0 7px; position: relative; }
.toggle::before { content: ""; position: absolute; left: 1px; top: 1px; width: 10px; height: 10px; border-radius: 50%; background: #b4b4b4; }
.sel-blend { width: 118px; padding: 0 6px 0 9px; color: #8a8a8a; border-color: #474747; }
.sel-blend .chev { color: #6c6c6c; }
.dim-label { color: #8c8c8c; white-space: nowrap; flex: none; }
.blend-row .dim-label { margin-left: 8px; }
.under { flex: 1; height: 21px; margin-left: -4px; border-bottom: 1px solid #444; }
.lock-label { margin-left: 3px; margin-right: -2px; }
.lock-row .li { margin-right: 6px; }
.fill-label { margin-left: 2px; }
.lay-body { flex: 1; background: #505050; }
.lay-foot { height: 26px; border-top: 1px solid #464646; display: flex; align-items: center; justify-content: flex-end; gap: 10px; padding-right: 29px; color: #686868; flex: none; }
.lay-foot svg { width: 16px; height: 16px; }
.fx-foot { font: italic 14px/16px "Liberation Serif", serif; width: 16px; }

.taskbar { height: 3px; background: #22323d; display: flex; padding-left: 740px; flex: none; }
.task-a { width: 60px; background: #a8632c; }
.task-b { width: 62px; background: #4b5a66; }

/* annotations */
.box { position: absolute; border: 4px solid #f81d0c; border-radius: 5px; pointer-events: none; }
.box-menu { left: 32px; top: -1px; width: 891px; height: 64px; }
.box-tools { left: -3px; top: 71px; width: 66px; height: 582px; }
.box-props { left: 1632px; top: 24px; width: 284px; height: 481px; }
.box-layers { left: 1638px; top: 548px; width: 271px; height: 482px; }
.note { position: absolute; font-size: 45px; line-height: 50px; color: #f81d0c; white-space: nowrap; }
.note-menu { left: 486px; top: 120px; }
.note-tools { left: 104px; top: 479px; }
.note-props { left: 1424px; top: 340px; }
.note-layers { left: 1423px; top: 752px; }
.watermark { position: absolute; left: 1666px; top: 1002px; font: 16px/22px "Liberation Sans", sans-serif; letter-spacing: -.08px; color: #d8d8d8; opacity: .85; white-space: nowrap; }
```
